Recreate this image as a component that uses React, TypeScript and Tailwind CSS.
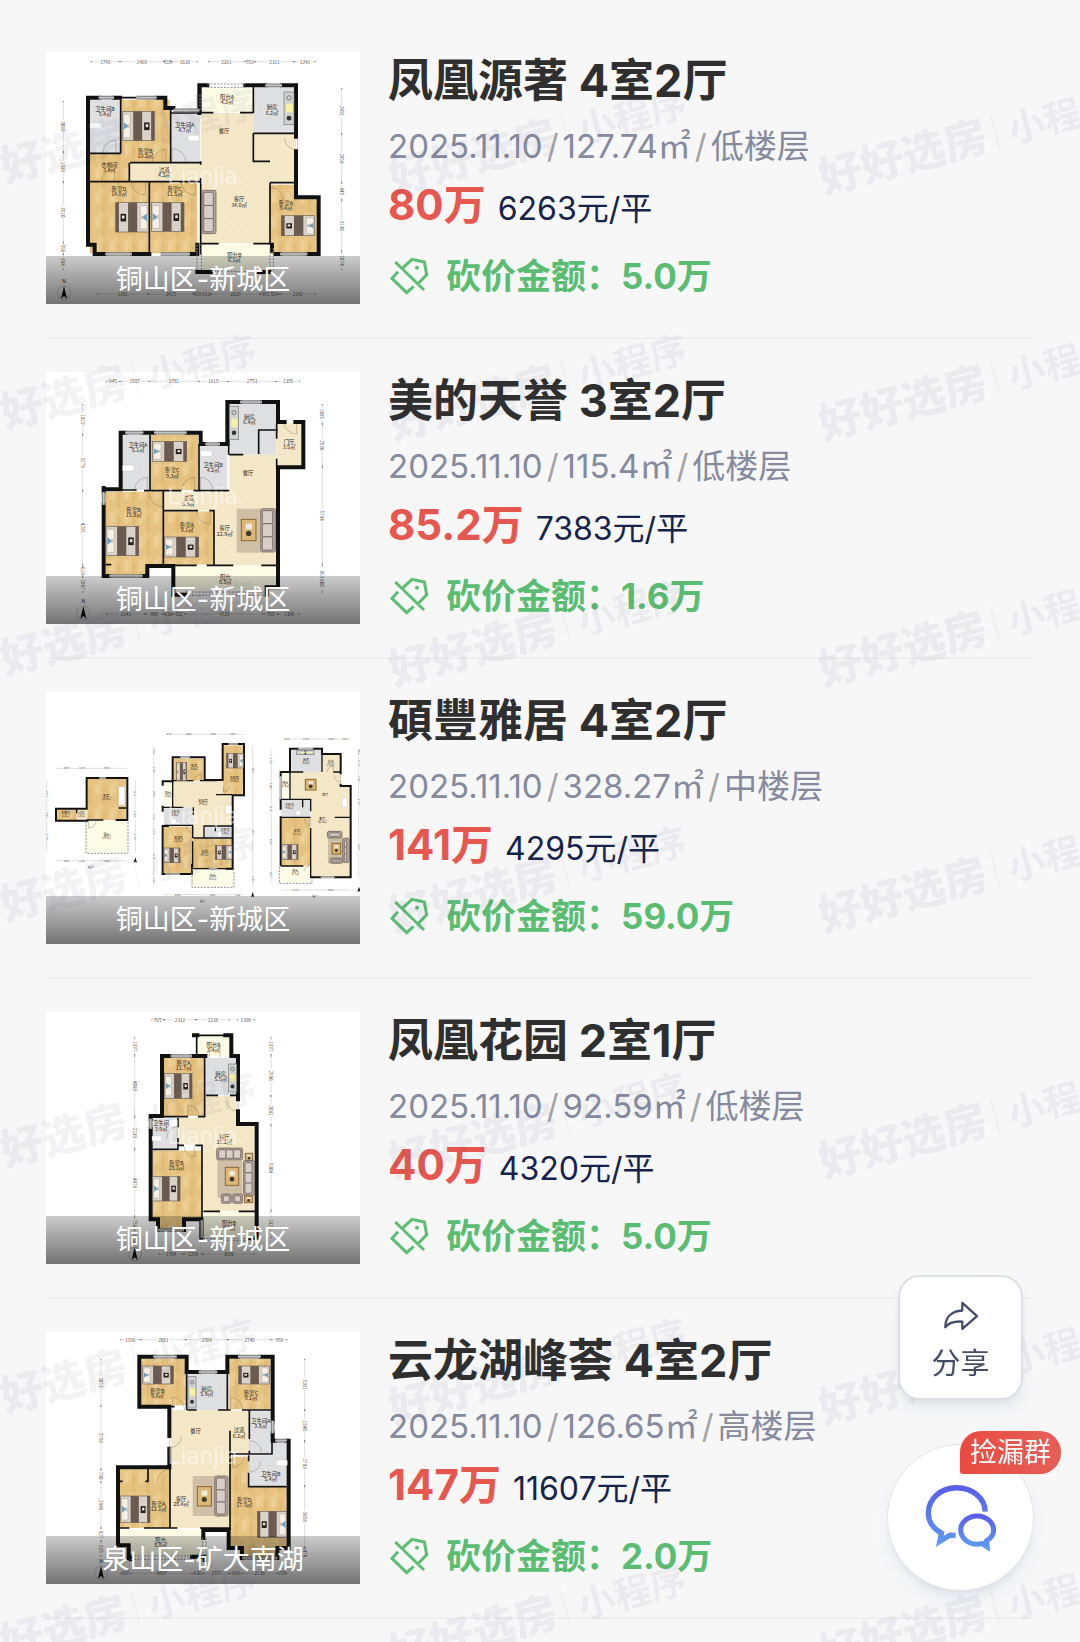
type Room = [x: number, y: number, w: number, h: number];
type Label = [x: number, y: number, name: string, area?: string];
type Furniture = [x: number, y: number, w: number, h: number, flip?: boolean];
type Door = [x: number, y: number, dx: number, dy: number];

type Plan = {
  wood?: Room[];
  tile?: Room[];
  hall?: Room[];
  balcony?: Room[];
  wall: string;
  thin: string;
  windows?: string;
  dashed?: string;
  doors?: Door[];
  beds?: Furniture[];
  sofas?: Furniture[];
  rugs?: Furniture[];
  tables?: Furniture[];
  fixtures?: Room[];
  stoves?: Room[];
  labels: Label[];
  rulers: { axis: 'h' | 'v'; at: number; stops: number[]; values: string[] }[];
  compass?: [number, number][];
  small?: boolean;
};

type Listing = {
  id: number;
  name: string;
  layout: string;
  date: string;
  area: string;
  floor: string;
  price: string;
  unit: string;
  cut: string;
  district: string;
  plan: Plan;
};

const plans: Record<string, Plan> = {
  phoenixSource: {
    wood: [
      [243, 165, 147, 188],
      [150, 327, 118, 84],
      [150, 411, 178, 215],
      [328, 411, 144, 215],
      [690, 420, 78, 208],
      [768, 458, 66, 170],
    ],
    tile: [
      [150, 165, 92, 162],
      [394, 205, 86, 150],
      [640, 128, 124, 138],
    ],
    hall: [
      [482, 205, 158, 390],
      [270, 356, 214, 54],
      [640, 266, 128, 148],
      [600, 350, 90, 246],
    ],
    balcony: [
      [482, 130, 158, 72],
      [484, 597, 206, 78],
    ],
    wall: 'M176 159H144V600H164V628H196 M222 159H240 M350 159H376V190H400 M276 628H328 M452 628H472V600 M478 205V122H502 M616 122H676 M726 122H768V276 M768 320V458H836V628H802 M706 628H720 M696 600V618 M472 682H512 M656 682H688',
    thin: 'M242 165V326 M150 326H242 M392 195V354 M270 354H480 M268 354V411 M150 411H484 M328 411V626 M482 122V206 M482 350V360 M482 400V630 M640 122V205 M482 204H520 M600 204H640 M640 266H768 M640 266V350H690 M690 414H768V350 M690 414V600 M484 597H536 M640 597H690 M392 205H480 M240 159H290',
    windows: 'M176 159H222 M290 159H350 M400 197H478 M196 628H276 M362 628H450 M676 122H726 M720 628H802',
    dashed: 'M502 118H616 M502 128H616 M471 150V200 M480 150V200 M512 680H656 M471 600V680 M484 600V680 M690 610V680 M700 610V680',
    doors: [
      [228, 326, -40, -40],
      [378, 354, -40, -40],
      [396, 354, 42, -42],
      [224, 411, -40, -38],
      [316, 413, -42, 38],
      [466, 413, -42, 38],
      [690, 466, 40, -38],
      [772, 280, -38, 36],
    ],
    beds: [
      [247, 200, 96, 88],
      [227, 474, 98, 88, true],
      [334, 474, 98, 86],
      [724, 513, 100, 60, true],
    ],
    sofas: [[486, 437, 42, 130]],
    fixtures: [
      [150, 235, 34, 17],
      [444, 272, 34, 17],
    ],
    stoves: [[732, 142, 30, 98]],
    labels: [
      [195, 199, '卫生间B', '5.4㎡'],
      [316, 324, '卧室B', '10.2㎡'],
      [434, 247, '卫生间A', '4.7㎡'],
      [561, 163, '阳台A', '4.3㎡'],
      [696, 194, '厨房', '6.2㎡'],
      [552, 264, '餐厅'],
      [208, 366, '衣帽间', '3.4㎡'],
      [373, 382, '过道', '4.2㎡'],
      [237, 439, '卧室D', '14.0㎡'],
      [404, 439, '卧室C', '11.5㎡'],
      [597, 470, '客厅', '34.0㎡'],
      [738, 481, '卧室A', '9.4㎡'],
      [583, 636, '阳台B', '6.1㎡'],
    ],
    rulers: [
      { axis: 'h', at: 51, stops: [152, 240, 372, 395, 474], values: ['1748', '2469', '515', '1638'] },
      { axis: 'h', at: 51, stops: [504, 614, 645, 762, 828], values: ['2261', '553', '2311', '1241'] },
      { axis: 'h', at: 748, stops: [170, 325, 460, 512, 660, 720, 828], values: ['3102', '2415', '589 612', '2820', '901 584', '2242'] },
      { axis: 'v', at: 70, stops: [168, 322, 412, 594, 628, 676], values: ['3089', '1589', '3510', '556', '998'] },
      { axis: 'v', at: 905, stops: [130, 268, 414, 466, 620, 676], values: ['2691', '2858', '845', '3130', '1074'] },
    ],
    compass: [[72, 744]],
  },
  mideaTianyu: {
    wood: [
      [332, 210, 142, 166],
      [197, 381, 172, 220],
      [197, 600, 122, 32],
      [370, 440, 152, 160],
    ],
    tile: [
      [246, 210, 84, 166],
      [480, 243, 82, 134],
      [568, 116, 140, 154],
    ],
    hall: [
      [568, 270, 140, 332],
      [524, 378, 60, 224],
      [370, 381, 200, 56],
      [656, 198, 54, 80],
      [710, 176, 74, 128],
    ],
    balcony: [[408, 604, 298, 72]],
    wall: 'M196 374H242V204H256 M310 204H342 M440 204H482V238H496 M540 238H562V112H600 M666 112H714V172H734 M766 172H790V308H714V668H680V690 M191 370V382 M191 420V634H208 M308 634H322V604H400V690H436',
    thin: 'M330 210V378 M242 376H290 M312 378H424 M460 378H568 M477 238V378 M566 120V270 M714 196H656V268 M710 176V222 M710 282V312 M370 378V602 M370 438H474 M508 438H524 M522 436V602 M400 602H470 M500 602H580 M664 602H710 M197 600H214 M568 270H610',
    windows: 'M256 204H310 M342 204H440 M496 238H540 M600 112H666 M191 382V420 M208 634H308',
    dashed: 'M436 682H672 M436 692H672',
    doors: [
      [322, 376, -38, -38],
      [370, 388, -42, 38],
      [464, 376, -38, -38],
      [482, 376, 36, -38],
      [510, 440, -40, 38],
      [770, 172, -38, 36],
    ],
    beds: [
      [338, 230, 102, 60],
      [198, 485, 98, 88],
      [374, 517, 102, 60],
    ],
    rugs: [[590, 432, 70, 132]],
    tables: [[604, 464, 44, 64]],
    sofas: [[662, 432, 44, 130]],
    fixtures: [
      [248, 302, 34, 17],
      [482, 258, 34, 17],
    ],
    stoves: [[568, 126, 28, 98]],
    labels: [
      [294, 247, '卫生间A', '5.1㎡'],
      [397, 323, '卧室C', '9.3㎡'],
      [519, 307, '卫生间B', '4.2㎡'],
      [628, 162, '厨房', '6.4㎡'],
      [747, 237, '门厅', '3.5㎡'],
      [624, 330, '餐厅'],
      [445, 407, '过道', '5.3㎡'],
      [281, 442, '卧室B', '15.8㎡'],
      [441, 487, '卧室A', '9.1㎡'],
      [554, 497, '客厅', '22.9㎡'],
      [556, 643, '阳台', '8.8㎡'],
    ],
    rulers: [
      { axis: 'h', at: 50, stops: [198, 240, 328, 476, 564, 708, 780], values: ['945', '1587', '2781', '1619', '2753', '1395'] },
      { axis: 'h', at: 748, stops: [198, 316, 370, 400, 436, 670, 714, 780], values: ['2343', '989', '636', '522', '4729', '700', '1395'] },
      { axis: 'v', at: 128, stops: [118, 210, 378, 602, 636, 684], values: ['1819', '3279', '4291', '619', '1087'] },
      { axis: 'v', at: 847, stops: [118, 178, 306, 600, 684], values: ['1085', '2536', '5794', '853 600'] },
    ],
    compass: [[130, 744]],
  },
  shuofengYaju: {
    small: true,
    wood: [
      [142, 282, 116, 124],
      [50, 374, 60, 32],
      [400, 222, 90, 66],
      [550, 182, 60, 148],
      [372, 426, 86, 142],
      [460, 462, 116, 90],
      [724, 398, 86, 146],
    ],
    tile: [
      [372, 368, 88, 54],
      [494, 424, 84, 36],
      [754, 196, 90, 66],
      [724, 344, 86, 52],
    ],
    hall: [
      [400, 290, 178, 78],
      [460, 290, 118, 132],
      [460, 420, 32, 42],
      [110, 374, 34, 32],
      [752, 262, 150, 82],
      [812, 304, 118, 274],
      [848, 210, 50, 56],
    ],
    balcony: [
      [138, 408, 124, 96],
      [456, 552, 124, 54],
      [370, 290, 28, 76],
      [720, 262, 30, 80],
      [720, 546, 92, 46],
    ],
    wall: 'M178 280H140V372H48V408H142 M198 280H262V406H230 M420 218H398V288 M450 218H494V286H548V178H566 M594 178H612V332H578V552H560 M398 290H368V300 M368 366V378 M384 424H368V568H376 M420 568H456V540 M774 192H750V262H722V274 M820 192H846V208H902V266 M902 300V304H932V578H884 M842 578H816 M722 344V372 M722 398V540',
    thin: 'M140 406H190 M110 374V386 M236 370H260 M398 288H460 M480 288H530 M528 330H576 M398 290V368 M368 368H432 M460 368V390 M372 422H460 M458 422V460 M460 460H576 M492 422V460 M492 424H576 M526 424V440 M530 552H578 M460 552H508 M458 470V552 M750 262H790 M846 208V262 M880 262H902 M722 344H812V380 M788 344V368 M722 398H812 M812 430V580 M884 398H930 M722 544H790 M750 262V342',
    windows: 'M178 280H198 M420 218H450 M566 178H594 M376 568H420 M508 552H530 M774 192H820 M842 578H884 M722 274V344',
    dashed: 'M138 410V506H264V410 M456 554V608H582V554 M718 546V596H816V580',
    doors: [
      [146, 410, 22, 20],
      [484, 288, -20, -20],
      [460, 424, -22, 20],
      [550, 304, 18, 18],
      [880, 262, -18, -18],
      [902, 272, -20, 20],
      [812, 402, -18, 22],
      [812, 560, -20, -16],
    ],
    beds: [
      [410, 234, 30, 54],
      [560, 206, 50, 44, true],
      [372, 490, 48, 44],
      [526, 482, 50, 42, true],
      [726, 480, 48, 44],
    ],
    rugs: [[864, 458, 64, 78]],
    tables: [
      [876, 476, 26, 32],
      [796, 284, 32, 32],
    ],
    sofas: [
      [862, 440, 44, 20],
      [908, 462, 20, 70],
      [870, 520, 36, 16],
    ],
    fixtures: [
      [394, 402, 14, 16],
      [532, 442, 14, 14],
      [768, 378, 14, 14],
      [236, 306, 18, 56],
      [556, 362, 18, 26],
      [906, 340, 16, 28],
    ],
    stoves: [[770, 198, 52, 12]],
    labels: [
      [199, 338, '卧室', '12.9㎡'],
      [77, 387, '衣帽间', '2.3㎡'],
      [124, 387, '过道', '1.6㎡'],
      [200, 453, '露台', '14.7㎡'],
      [463, 248, '卧室', '5.6㎡'],
      [583, 284, '主卧室', '10.0㎡'],
      [489, 352, '起居室', '14.0㎡'],
      [384, 327, '阳台', '2.0㎡'],
      [405, 385, '卫生间', '3.9㎡'],
      [555, 439, '卫生间', '2.6㎡'],
      [415, 463, '卧室B', '12.0㎡'],
      [494, 505, '卧室', '9.7㎡'],
      [518, 577, '阳台', '5.1㎡'],
      [798, 230, '厨房', '5.8㎡'],
      [872, 234, '玄关', '2.5㎡'],
      [736, 299, '阳台', '2.4㎡'],
      [856, 333, '餐厅'],
      [748, 363, '卫生间', '4.6㎡'],
      [847, 407, '客厅', '31.3㎡'],
      [771, 443, '卧室', '11.1㎡'],
      [766, 562, '阳台', '3.7㎡'],
      [153, 549, '层三'],
      [489, 652, '层二'],
      [826, 637, '层一'],
    ],
    rulers: [
      { axis: 'h', at: 251, stops: [48, 110, 140, 260], values: ['1693', '1138', '3583'] },
      { axis: 'h', at: 528, stops: [48, 110, 140, 260], values: ['1693', '1138', '3583'] },
      { axis: 'v', at: 20, stops: [284, 372, 408, 504], values: ['2611', '1122', '2719'] },
      { axis: 'v', at: 286, stops: [284, 368, 408, 504], values: ['2611', '1122', '2719'] },
      { axis: 'h', at: 149, stops: [376, 398, 494, 544, 612], values: ['872', '2829', '1528', '1801'] },
      { axis: 'h', at: 630, stops: [370, 456, 578, 610], values: ['2629', '3538', '812'] },
      { axis: 'v', at: 341, stops: [182, 222, 288, 368, 424, 460, 568, 606], values: ['996', '2129', '2296', '1602', '1130', '3108', '908'] },
      { axis: 'v', at: 638, stops: [182, 332, 552, 612], values: ['4420', '6330', '1625'] },
      { axis: 'h', at: 163, stops: [732, 750, 846, 900, 932], values: ['813', '2784', '1509', '893'] },
      { axis: 'h', at: 616, stops: [722, 812, 932], values: ['2719', '3504'] },
      { axis: 'v', at: 694, stops: [194, 262, 344, 398, 544, 594], values: ['2019', '2388', '1505', '4219', '1350'] },
      { axis: 'v', at: 956, stops: [194, 208, 262, 304, 398, 578], values: ['415', '1602', '1186', '2719', '5221'] },
    ],
    compass: [
      [286, 526],
      [638, 630],
      [957, 614],
    ],
  },
  phoenixGarden: {
    wood: [
      [372, 160, 120, 174],
      [338, 438, 148, 200],
      [354, 636, 78, 36],
    ],
    tile: [
      [498, 160, 92, 112],
      [336, 342, 76, 90],
    ],
    hall: [
      [498, 274, 92, 344],
      [416, 340, 84, 80],
      [488, 362, 156, 256],
    ],
    balcony: [
      [470, 94, 98, 60],
      [490, 622, 156, 78],
    ],
    wall: 'M392 154H366V334H332V342 M332 372V644H354V676 M456 154H496 M462 92H472 M556 92H574V154H594V284 M594 320V358H650V700H630 M432 676V644H484V700',
    thin: 'M494 154V338 M368 336H444 M474 336H496 M470 92V154 M498 272H534 M570 272H590 M414 340V368 M414 400V434 M334 434H416 M414 422H432 M466 422H486V640 M490 620H540 M596 620H648 M472 92H556',
    windows: 'M392 154H456 M332 342V372 M354 676H432 M486 646V700',
    dashed: 'M490 702H640 M490 708H640',
    doors: [
      [444, 336, 34, -34],
      [412, 402, -32, -36],
      [464, 424, -32, 32],
      [594, 288, -34, 32],
      [540, 158, -34, -44],
    ],
    beds: [
      [374, 207, 82, 74],
      [338, 515, 82, 74],
    ],
    rugs: [[532, 468, 74, 112]],
    tables: [
      [556, 488, 40, 54],
      [616, 446, 22, 22],
      [614, 574, 24, 20],
    ],
    sofas: [
      [530, 430, 78, 36],
      [610, 468, 34, 104],
      [544, 568, 30, 28],
      [578, 568, 30, 28],
    ],
    fixtures: [
      [336, 394, 28, 15],
      [380, 344, 32, 22],
    ],
    stoves: [[565, 178, 25, 84]],
    labels: [
      [520, 126, '阳台A', '3.4㎡'],
      [431, 180, '卧室A', '11.7㎡'],
      [542, 214, '厨房', '5.5㎡'],
      [363, 362, '卫生间', '3.9㎡'],
      [553, 402, '客厅', '21.2㎡'],
      [409, 480, '卧室B', '18.1㎡'],
      [567, 660, '阳台B', '5.0㎡'],
    ],
    rulers: [
      { axis: 'h', at: 45, stops: [334, 372, 468, 570], values: ['765', '2312', '2238'] },
      { axis: 'h', at: 45, stops: [590, 644], values: ['1300'] },
      { axis: 'h', at: 748, stops: [356, 430, 488, 644], values: ['1784', '1298', '3608'] },
      { axis: 'v', at: 284, stops: [98, 152, 336, 434, 636, 676, 720], values: ['1337', '4089', '2189', '4878', '758', '825'] },
      { axis: 'v', at: 693, stops: [98, 152, 274, 362, 618, 700], values: ['1337', '2596', '2081', '5904', '1825'] },
    ],
    compass: [[284, 748]],
  },
  yunlongLake: {
    wood: [
      [304, 102, 134, 140],
      [566, 102, 126, 152],
      [240, 434, 150, 176],
      [570, 396, 56, 280],
      [570, 486, 172, 184],
      [606, 670, 106, 28],
    ],
    tile: [
      [442, 148, 120, 108],
      [630, 260, 62, 128],
      [630, 392, 112, 90],
      [698, 352, 44, 60],
    ],
    hall: [
      [392, 256, 176, 354],
      [560, 258, 66, 130],
    ],
    balcony: [[240, 614, 250, 80]],
    wall: 'M340 96H298V246H388V334 M388 372V428H234V662H266V700 M410 96H440V142H476 M532 142H562V96H594 M662 96H698V288 M698 326V348H706 M740 348H746V670H712V700 M606 700V670H566V616H490V640 M272 696V704 M456 696H494V706',
    thin: 'M440 98V256 M298 246H404 M562 98V258 M442 256H470 M534 256H572 M606 256H696 M388 248V256 M628 258V344 M570 318V388H628V378 M630 388H696V350 M570 388V616 M626 392V410 M626 444V486H742 M390 428V610 M324 432V472 M316 470H326 M240 470H248 M236 610H268 M312 610H412 M480 610H570',
    windows: 'M340 96H410 M476 142H532 M594 96H662 M698 288V326 M706 348H740 M606 700H712',
    dashed: 'M272 694H456 M272 704H456 M488 640V700 M498 640V700',
    doors: [
      [398, 256, 36, -38],
      [572, 256, 36, -38],
      [388, 334, 36, 36],
      [388, 472, -36, -38],
      [578, 390, 36, 38],
      [628, 382, 36, -34],
      [628, 410, 34, 32],
    ],
    beds: [
      [308, 124, 92, 54],
      [596, 124, 92, 54, true],
      [242, 514, 88, 80],
      [652, 560, 88, 78, true],
    ],
    rugs: [[458, 454, 66, 120]],
    tables: [[472, 486, 42, 58]],
    sofas: [[524, 454, 40, 120]],
    fixtures: [[710, 406, 32, 17]],
    stoves: [[444, 156, 24, 94]],
    labels: [
      [352, 204, '卧室B', '9.0㎡'],
      [500, 199, '厨房', '5.9㎡'],
      [633, 211, '卧室C', '9.1㎡'],
      [662, 294, '卫生间A', '3.8㎡'],
      [467, 325, '餐厅'],
      [597, 323, '过道', '6.2㎡'],
      [692, 454, '卫生间B', '5.4㎡'],
      [356, 544, '卧室A', '12.1㎡'],
      [423, 528, '客厅', '28.4㎡'],
      [613, 531, '卧室D', '17.9㎡'],
      [362, 652, '阳台', '8.8㎡'],
    ],
    rulers: [
      { axis: 'h', at: 45, stops: [240, 302, 438, 564, 694, 742], values: ['1196', '2881', '2504', '2740', '950'] },
      { axis: 'h', at: 746, stops: [240, 272, 456, 490, 568, 606, 712, 742], values: ['697', '4009', '636', '1557', '924', '2138', '720'] },
      { axis: 'v', at: 183, stops: [102, 244, 434, 472, 610, 650, 696], values: ['3053', '3758', '790', '2896', '927', '925'] },
      { axis: 'v', at: 794, stops: [102, 256, 350, 484, 668, 696], values: ['3101', '1980', '2789', '3858', '1475'] },
    ],
    compass: [[183, 744]],
  },
};

const listings: Listing[] = [
  { id: 1, name: '凤凰源著', layout: '4室2厅', date: '2025.11.10', area: '127.74㎡', floor: '低楼层', price: '80万', unit: '6263元/平', cut: '5.0万', district: '铜山区-新城区', plan: plans.phoenixSource },
  { id: 2, name: '美的天誉', layout: '3室2厅', date: '2025.11.10', area: '115.4㎡', floor: '低楼层', price: '85.2万', unit: '7383元/平', cut: '1.6万', district: '铜山区-新城区', plan: plans.mideaTianyu },
  { id: 3, name: '碩豐雅居', layout: '4室2厅', date: '2025.11.10', area: '328.27㎡', floor: '中楼层', price: '141万', unit: '4295元/平', cut: '59.0万', district: '铜山区-新城区', plan: plans.shuofengYaju },
  { id: 4, name: '凤凰花园', layout: '2室1厅', date: '2025.11.10', area: '92.59㎡', floor: '低楼层', price: '40万', unit: '4320元/平', cut: '5.0万', district: '铜山区-新城区', plan: plans.phoenixGarden },
  { id: 5, name: '云龙湖峰荟', layout: '4室2厅', date: '2025.11.10', area: '126.65㎡', floor: '高楼层', price: '147万', unit: '11607元/平', cut: '2.0万', district: '泉山区-矿大南湖', plan: plans.yunlongLake },
];

function Rooms({ rooms = [], fill }: { rooms?: Room[]; fill: string }) {
  return rooms.map(([x, y, w, h], i) => <rect key={i} x={x} y={y} width={w} height={h} fill={fill} />);
}

function Bed({ box: [x, y, w, h, flip] }: { box: Furniture }) {
  return (
    <g transform={flip ? `translate(${x + w} ${y}) scale(-1 1)` : `translate(${x} ${y})`}>
      <rect width={w} height={h} fill="#d9d2c8" stroke="#6d6259" strokeWidth="2" />
      <rect x={w * 0.03} y={h * 0.1} width={w * 0.22} height={h * 0.36} rx="4" fill="#f5efe6" stroke="#8c7b63" strokeWidth="1" />
      <rect x={w * 0.03} y={h * 0.54} width={w * 0.22} height={h * 0.36} rx="4" fill="#f5efe6" stroke="#8c7b63" strokeWidth="1" />
      <path d={`M${w * 0.04} ${h * 0.36}l${w * 0.14} ${h * 0.14}l${-w * 0.14} ${h * 0.14}z`} fill="#6fa0bd" />
      <rect x={w * 0.34} width={w * 0.28} height={h} fill="#6a5a50" />
      <rect x={w * 0.9} width={w * 0.1} height={h} fill="#6a5a50" />
      <rect x={w * 0.68} y={h * 0.38} width={w * 0.17} height={h * 0.26} fill="#26211e" />
      <rect x={w * 0.73} y={h * 0.44} width={w * 0.08} height={h * 0.1} fill="#ece7e0" />
    </g>
  );
}

function Sofa({ box: [x, y, w, h] }: { box: Furniture }) {
  const tall = h > w;
  const seats = Math.max(w, h) > 60 ? [0, 1, 2] : [0];
  const step = ((tall ? h : w) - 12) / seats.length;
  return (
    <g stroke="#5d504b" strokeWidth="2">
      <rect x={x} y={y} width={w} height={h} rx="5" fill="#b3a69f" />
      {seats.map((n) => (
        <rect
          key={n}
          x={tall ? x + 5 : x + 6 + n * step}
          y={tall ? y + 6 + n * step : y + 5}
          width={tall ? w - 13 : step}
          height={tall ? step : h - 10}
          rx="4"
          fill="#d9cdc7"
        />
      ))}
    </g>
  );
}

function Ruler({ ruler, small }: { ruler: Plan['rulers'][number]; small?: boolean }) {
  const { axis, at, stops, values } = ruler;
  const size = small ? 8 : 14;
  return values.map((value, i) => {
    const a = stops[i];
    const b = stops[i + 1];
    const mid = (a + b) / 2;
    const half = value.length * size * 0.32;
    const line = (from: number, to: number) => (axis === 'h' ? `M${from} ${at}H${to}` : `M${at} ${from}V${to}`);
    return (
      <g key={i} fill="#4a4a4a">
        {b - a > half * 2 + 12 && <path d={`${line(a + 5, mid - half)} ${line(mid + half, b - 5)}`} stroke="#9a9a9a" strokeWidth="1" />}
        {[a + 2, b - 2].map((p) => (
          <circle key={p} cx={axis === 'h' ? p : at} cy={axis === 'h' ? at : p} r={small ? 1 : 2} fill="#707070" />
        ))}
        <text
          x={axis === 'h' ? mid : at}
          y={axis === 'h' ? at : mid}
          fontSize={size}
          textAnchor="middle"
          dominantBaseline="central"
          transform={axis === 'v' ? `rotate(90 ${at} ${mid})` : undefined}
        >
          {value}
        </text>
      </g>
    );
  });
}

function FloorPlan({ plan, id }: { plan: Plan; id: number }) {
  const { small } = plan;
  const labelSize = small ? 9 : 16;
  return (
    <svg viewBox="18 22 942 756" className="block h-auto w-full bg-white font-['Noto_Sans_CJK_SC',sans-serif]" role="img" aria-label="户型图">
      <defs>
        <pattern id={`wood-${id}`} width="44" height="72" patternUnits="userSpaceOnUse">
          <rect width="44" height="72" fill="#e6c381" />
          <rect width="11" height="40" fill="#ebcb8c" />
          <rect x="11" y="20" width="11" height="52" fill="#e1bc78" />
          <rect x="33" y="10" width="11" height="34" fill="#edd097" />
        </pattern>
        <pattern id={`tile-${id}`} width="20" height="20" patternUnits="userSpaceOnUse">
          <rect width="20" height="20" fill="#dfe0e2" />
          <path d="M0 0H20M0 0V20" stroke="#d3d5d8" strokeWidth="1" />
        </pattern>
        <pattern id={`hall-${id}`} width="26" height="26" patternUnits="userSpaceOnUse">
          <rect width="26" height="26" fill="#f5e8c8" />
          <path d="M3 5l6 3M15 4l5 6M6 18l7-4M18 20l6 2" stroke="#ecdeb8" strokeWidth="2" />
        </pattern>
      </defs>
      <Rooms rooms={plan.hall} fill={`url(#hall-${id})`} />
      <Rooms rooms={plan.balcony} fill="#fbfbe6" />
      <Rooms rooms={plan.wood} fill={`url(#wood-${id})`} />
      <Rooms rooms={plan.tile} fill={`url(#tile-${id})`} />
      {plan.doors?.map(([x, y, dx, dy], i) => (
        <path
          key={i}
          d={`M${x} ${y}v${dy}A${Math.abs(dx)} ${Math.abs(dy)} 0 0 ${dx * dy > 0 ? 0 : 1} ${x + dx} ${y}`}
          fill="none"
          stroke="#6b5b3d"
          strokeWidth="1"
        />
      ))}
      <path d={plan.wall} fill="none" stroke="#111" strokeWidth={small ? 6 : 12} strokeLinecap="square" />
      <path d={plan.thin} fill="none" stroke="#111" strokeWidth={small ? 4 : 5} />
      <path d={plan.windows} fill="none" stroke="#777" strokeWidth={small ? 6 : 11} />
      <path d={plan.windows} fill="none" stroke="#c4c4c4" strokeWidth={small ? 3 : 5} />
      <path d={plan.dashed} fill="none" stroke="#8f8f8f" strokeWidth="3" strokeDasharray="6 4" />
      {plan.rugs?.map(([x, y, w, h], i) => (
        <rect key={i} x={x} y={y} width={w} height={h} fill="#cfbfa6" />
      ))}
      {plan.tables?.map(([x, y, w, h], i) => (
        <g key={i}>
          <rect x={x} y={y} width={w} height={h} fill="#dcb878" stroke="#8a6430" strokeWidth="3" />
          <rect x={x + w * 0.3} y={y + h * 0.2} width={w * 0.42} height={h * 0.26} fill="#efeae0" />
          <circle cx={x + w * 0.5} cy={y + h * 0.66} r={w * 0.18} fill="#3c3a30" />
        </g>
      ))}
      {plan.sofas?.map((box, i) => <Sofa key={i} box={box} />)}
      {plan.beds?.map((box, i) => <Bed key={i} box={box} />)}
      {plan.fixtures?.map(([x, y, w, h], i) => (
        <rect key={i} x={x} y={y} width={w} height={h} rx="3" fill="#fff" stroke="#bbb" strokeWidth="1" />
      ))}
      {plan.stoves?.map(([x, y, w, h], i) => (
        <g key={i}>
          <rect x={x} y={y} width={w} height={h} fill="#cfd2d0" stroke="#777" strokeWidth="2" />
          <rect x={x + w * 0.2} y={y + h * 0.36} width={w * 0.7} height={h * 0.26} fill="#f4f0a6" />
          <circle cx={x + w * 0.5} cy={y + h * 0.18} r={Math.min(w, h) * 0.22} fill="none" stroke="#555" strokeWidth="2" />
          <circle cx={x + w * 0.5} cy={y + h * 0.8} r={Math.min(w, h) * 0.24} fill="#333" />
        </g>
      ))}
      {plan.labels.map(([x, y, name, area]) => (
        <text key={`${name}${x}`} fontSize={labelSize} fill="#2b2620" textAnchor="middle">
          <tspan x={x} y={y}>{name}</tspan>
          {area && <tspan x={x} dy={labelSize}>{area}</tspan>}
        </text>
      ))}
      {plan.rulers.map((ruler, i) => <Ruler key={i} ruler={ruler} small={small} />)}
      <text x="488" y="418" fontSize="70" textAnchor="middle" fill="#fff" fillOpacity="0.5" className="font-['Inter',sans-serif]">
        Lianjia
      </text>
      {plan.compass?.map(([x, y]) => (
        <g key={x}>
          {!small && <circle cx={x} cy={y} r="20" fill="none" stroke="#8a8a8a" strokeWidth="1" />}
          {!small && <text x={x} y={y - 28} fontSize="15" textAnchor="middle" fill="#222">N</text>}
          <path d={small ? `M${x} ${y - 8}l5 16l-5 -3l-5 3z` : `M${x} ${y - 20}l9 38l-9 -8l-9 8z`} fill="#111" />
        </g>
      ))}
    </svg>
  );
}

function BargainIcon() {
  return (
    <svg viewBox="54 648 126 126" className="size-[42px] shrink-0" fill="none" stroke="#5bbd72" strokeWidth="9" aria-hidden="true">
      <path d="M97 688L126 661L163 669L170 707L146 732" />
      <path d="M84 698L66 718L110 761L131 742" />
      <path d="M76 669L162 753" />
      <circle cx="141" cy="686" r="6" fill="#5bbd72" stroke="none" />
    </svg>
  );
}

function ShareIcon() {
  return (
    <svg viewBox="216 150 110 90" className="w-[36px]" fill="none" stroke="#454c68" strokeWidth="7" strokeLinejoin="round" aria-hidden="true">
      <path d="M275 156L320 196L275 235V213C250 211 234 216 223 230C223 200 242 181 275 179Z" />
    </svg>
  );
}

function ChatIcon() {
  return (
    <svg viewBox="165 708 214 200" className="w-[72px]" fill="none" aria-hidden="true">
      <defs>
        <linearGradient id="chat" x1="0" y1="710" x2="0" y2="905" gradientUnits="userSpaceOnUse">
          <stop offset="0" stopColor="#5a5ce6" />
          <stop offset="1" stopColor="#5f9ff2" />
        </linearGradient>
        <linearGradient id="chat-small" x1="0" y1="796" x2="0" y2="905" gradientUnits="userSpaceOnUse">
          <stop offset="0" stopColor="#5a5ce6" />
          <stop offset="1" stopColor="#5f9ff2" />
        </linearGradient>
      </defs>
      <path d="M344 790C343 750 306 719 259 719C212 719 175 752 175 795C175 820 190 842 214 854L209 878L239 860L256 861" stroke="url(#chat)" strokeWidth="16" />
      <path d="M348 877C361 870 369 858 369 845C369 822 347 803 320 803C293 803 271 822 271 845C271 868 293 887 320 887C325 887 330 886 335 885L350 895Z" stroke="url(#chat-small)" strokeWidth="15" />
    </svg>
  );
}

function Watermark() {
  return (
    <svg className="pointer-events-none absolute inset-0 h-full w-full font-['Noto_Sans_CJK_SC',sans-serif]" aria-hidden="true">
      <defs>
        <pattern id="watermark" x="-46" y="83" width="430" height="246" patternUnits="userSpaceOnUse">
          <g transform="translate(10 111) rotate(-15)" fill="#2f3a66" fillOpacity="0.06">
            <text fontSize="43" fontWeight="900">好好选房</text>
            <rect x="181" y="-34" width="1" height="36" />
            <text x="195" fontSize="37" fontWeight="700">小程序</text>
          </g>
        </pattern>
      </defs>
      <rect width="100%" height="100%" fill="url(#watermark)" />
    </svg>
  );
}

function Slash() {
  return <span className="px-1 text-[#a3a3a3]">/</span>;
}

function ListingCard({ item }: { item: Listing }) {
  return (
    <li className="border-b-2 border-[#efefef] py-[33px] first:pt-0">
      <a href={`#listing-${item.id}`} className="flex items-start gap-7">
        <div className="relative w-[314px] shrink-0">
          <FloorPlan plan={item.plan} id={item.id} />
          <p className="absolute inset-x-0 bottom-0 bg-gradient-to-b from-black/20 to-black/55 text-center text-[27px] leading-[48px] text-white">
            {item.district}
          </p>
        </div>
        <div className="min-w-0 flex-1 whitespace-nowrap">
          <h2 className="text-[45px] leading-[58px] font-bold text-[#2f2f2f]">
            {item.name} {item.layout}
          </h2>
          <p className="mt-2 text-[33px] leading-[56px] text-[#858a9e]">
            {item.date}
            <Slash />
            {item.area}
            <Slash />
            {item.floor}
          </p>
          <p className="flex h-[62px] items-baseline gap-3">
            <strong className="text-[42px] leading-[62px] font-bold text-[#e6584f]">{item.price}</strong>
            <span className="text-[32px] leading-[40px] text-[#16234a]">{item.unit}</span>
          </p>
          <p className="mt-3 flex items-center gap-4 text-[35px] leading-[56px] font-bold text-[#5bbd72]">
            <BargainIcon />
            <span>砍价金额：{item.cut}</span>
          </p>
        </div>
      </a>
    </li>
  );
}

export default function App() {
  return (
    <main className="relative min-h-screen overflow-hidden bg-[#f7f7f8] px-[46px] pt-[52px] pb-[23px] font-['Inter','Noto_Sans_CJK_SC',sans-serif]">
      <ul>
        {listings.map((item) => (
          <ListingCard key={item.id} item={item} />
        ))}
      </ul>
      <Watermark />
      <div className="fixed right-[46px] bottom-[51px] flex flex-col items-center gap-11">
        <button
          type="button"
          className="flex size-[125px] flex-col items-center justify-center gap-4 rounded-[22px] border-2 border-[#dcdee5] bg-white pt-2 text-[29px] leading-[36px] text-[#454c68] shadow-lg shadow-slate-400/20"
        >
          <ShareIcon />
          分享
        </button>
        <button
          type="button"
          className="relative flex size-[147px] items-center justify-center rounded-full border border-[#e3e4e8] bg-white shadow-lg shadow-slate-400/20"
        >
          <ChatIcon />
          <span className="absolute -top-[14px] -right-[28px] rounded-[21px] rounded-bl-[3px] bg-gradient-to-r from-[#ea4a40] to-[#e45f58] px-[10px] text-[27px] leading-[43px] whitespace-nowrap text-white">
            捡漏群
          </span>
        </button>
      </div>
    </main>
  );
}
